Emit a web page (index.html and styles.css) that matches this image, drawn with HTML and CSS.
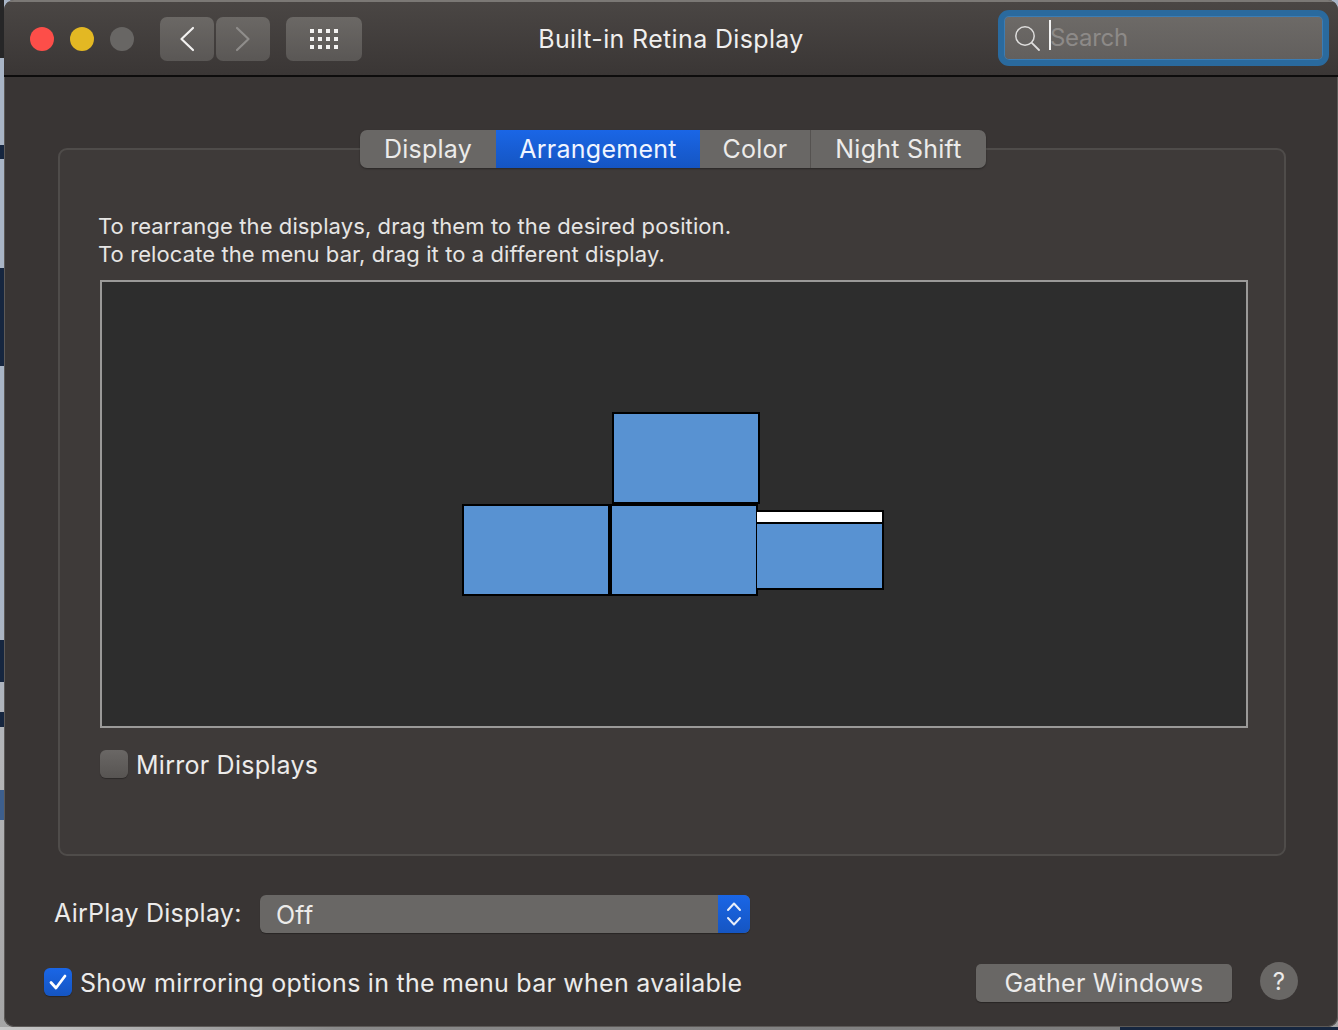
FILE: index.html
```html
<!DOCTYPE html>
<html lang="en">
<head>
<meta charset="utf-8">
<title>Built-in Retina Display</title>
<link rel="stylesheet" href="styles.css">
</head>
<body>
<div class="desktop">
  <i class="patch p1"></i><i class="patch p2"></i><i class="patch p3"></i><i class="patch p4"></i><i class="patch p5"></i><i class="patch p6"></i><i class="patch p7"></i>
  <main class="window">
    <header class="titlebar">
      <div class="lights">
        <span class="light red"></span>
        <span class="light yellow"></span>
        <span class="light grey"></span>
      </div>
      <div class="nav">
        <button class="tb-btn nav-btn">
          <svg width="16" height="26" viewBox="0 0 16 26"><path d="M14 2 2.500 13 14 24" fill="none" stroke="#f2f1f0" stroke-width="2.200" stroke-linecap="round" stroke-linejoin="round"/></svg>
        </button>
        <button class="tb-btn nav-btn">
          <svg width="16" height="26" viewBox="0 0 16 26"><path d="M2 2 13.500 13 2 24" fill="none" stroke="#8f8d8b" stroke-width="2.200" stroke-linecap="round" stroke-linejoin="round"/></svg>
        </button>
      </div>
      <button class="tb-btn grid-btn">
        <svg width="30" height="22" viewBox="0 0 30 22" fill="#f4f3f2">
          <rect x="1" y="1" width="4" height="4"/><rect x="9" y="1" width="4" height="4"/><rect x="17" y="1" width="4" height="4"/><rect x="25" y="1" width="4" height="4"/>
          <rect x="1" y="9" width="4" height="4"/><rect x="9" y="9" width="4" height="4"/><rect x="17" y="9" width="4" height="4"/><rect x="25" y="9" width="4" height="4"/>
          <rect x="1" y="17" width="4" height="4"/><rect x="9" y="17" width="4" height="4"/><rect x="17" y="17" width="4" height="4"/><rect x="25" y="17" width="4" height="4"/>
        </svg>
      </button>
      <h1 class="title">Built-in Retina Display</h1>
      <div class="search">
        <svg class="search-icon" width="26" height="26" viewBox="0 0 26 26"><circle cx="11" cy="11" r="9.200" fill="none" stroke="#dedddc" stroke-width="1.500"/><path d="M17.800 17.800 25 25" stroke="#dedddc" stroke-width="1.800" stroke-linecap="round"/></svg>
        <span class="caret"></span>
        <span class="placeholder">Search</span>
      </div>
    </header>

    <section class="content">
      <div class="panel">
        <nav class="tabs">
          <span class="tab t-display">Display</span>
          <span class="tab t-arr active">Arrangement</span>
          <span class="tab t-color">Color</span>
          <span class="tab t-night">Night Shift</span>
        </nav>
        <p class="help">To rearrange the displays, drag them to the desired position.<br>To relocate the menu bar, drag it to a different display.</p>
        <div class="canvas">
          <div class="screen s-top"></div>
          <div class="screen s-left"></div>
          <div class="screen s-mid"></div>
          <div class="screen s-right"><div class="menubar"></div></div>
        </div>
        <label class="check mirror"><span class="box"></span>Mirror Displays</label>
      </div>

      <div class="airplay">
        <span class="air-label">AirPlay Display:</span>
        <div class="select">
          <span class="sel-val">Off</span>
          <span class="stepper">
            <svg width="16" height="28" viewBox="0 0 16 28" fill="none" stroke="#e8eefa" stroke-width="2" stroke-linecap="round" stroke-linejoin="round"><path d="M2 10 8 3.500 14 10"/><path d="M2 18 8 24.500 14 18"/></svg>
          </span>
        </div>
      </div>

      <div class="footer">
        <label class="check show"><span class="box on">
          <svg width="20" height="18" viewBox="0 0 20 18"><path d="M3 9.500 8 15 17 3" fill="none" stroke="#fff" stroke-width="2.800" stroke-linecap="round" stroke-linejoin="round"/></svg>
        </span>Show mirroring options in the menu bar when available</label>
        <button class="gather">Gather Windows</button>
        <button class="help-btn">?</button>
      </div>
    </section>
  </main>
</div>
</body>
</html>
```
FILE: styles.css
```css
* { box-sizing: border-box; }
html, body { margin: 0; height: 100%; overflow: hidden; }
body { font-family: "Inter", "Liberation Sans", sans-serif; letter-spacing: .25px; }
button { font: inherit; border: 0; padding: 0; letter-spacing: inherit; }

.desktop {
  position: relative;
  width: 1338px;
  height: 1030px;
  background: linear-gradient(#a9b5c6 0, #a9b5c6 600px, #b4b5b7 760px, #a5a5a5);
  padding-left: 4px;
}
.desktop::after {
  content: "";
  position: absolute;
  left: 0;
  bottom: 0;
  width: 1120px;
  height: 3px;
  background: linear-gradient(90deg, #c8c8c8, #8a8a8a 30%, #7c7c7c);
}
.patch { position: absolute; left: 0; width: 4px; display: block; background: #16263f; }
.p1 { top: 0; height: 58px; background: #262627; }
.p2 { top: 268px; height: 98px; }
.p3 { top: 640px; height: 42px; }
.p4 { top: 1027px; left: 1120px; width: 218px; height: 3px; z-index: 1; }
.p5 { top: 145px; height: 14px; }
.p6 { top: 712px; height: 15px; }
.p7 { top: 790px; height: 30px; background: #3d5f8d; }

.window {
  position: relative;
  width: 1334px;
  height: 1027px;
  background: #393534;
  border-radius: 10px;
  overflow: hidden;
  box-shadow: inset 0 0 0 1px #5c5957;
  display: flex;
  flex-direction: column;
}

.titlebar {
  height: 77px;
  flex: none;
  display: flex;
  align-items: center;
  padding: 0 0 0 26px;
  background: linear-gradient(#4a4644, #3a3635);
  border-top: 2px solid #7b7875;
  border-bottom: 2px solid #0d0c0c;
  position: relative;
}
.lights { display: flex; gap: 16px; width: 130px; flex: none; }
.light { width: 24px; height: 24px; border-radius: 50%; }
.red { background: #fd4e49; }
.yellow { background: #e3b823; }
.grey { background: #686664; }

.nav { display: flex; gap: 2px; }
.tb-btn {
  height: 44px;
  border-radius: 7px;
  background: linear-gradient(#6b6865, #5a5755);
  display: flex;
  align-items: center;
  justify-content: center;
}
.nav-btn { width: 54px; }
.grid-btn { width: 76px; margin-left: 16px; }

.title {
  position: absolute;
  left: 0;
  right: 0;
  top: 21px;
  margin: 0;
  text-align: center;
  font-size: 25px;
  font-weight: 400;
  line-height: 32px;
  letter-spacing: .35px;
  color: #f0efee;
}

.search {
  position: absolute;
  left: 994px;
  top: 8px;
  width: 331px;
  height: 56px;
  border: 6px solid #2a6a9e;
  border-radius: 11px;
  background: linear-gradient(#6d6a67, #625f5d);
  box-shadow: inset 0 0 0 1px #3b7db5;
  display: flex;
  align-items: center;
}
.search-icon { position: absolute; left: 10px; top: 9px; }
.caret { position: absolute; left: 45px; top: 4px; width: 2px; height: 30px; background: #f4f4f4; }
.placeholder { position: absolute; left: 46px; top: 7px; font-size: 24px; line-height: 30px; letter-spacing: -.3px; color: #8d8a88; }

.content { flex: 1; position: relative; padding: 71px 48px 0 54px; }

.panel {
  position: relative;
  width: 1228px;
  height: 708px;
  background: #3e3a39;
  border: 2px solid #4f4c4a;
  border-radius: 9px;
  padding: 62px 36px 0 38px;
}
.tabs {
  position: absolute;
  left: 300px;
  top: -20px;
  height: 38px;
  display: flex;
  border-radius: 7px;
  overflow: hidden;
  background: #696765;
  box-shadow: 0 1px 2px rgba(0,0,0,.35);
  font-size: 25px;
  color: #ecebea;
}
.tab { display: flex; align-items: center; justify-content: center; line-height: 38px; }
.t-display { width: 136px; }
.t-arr { width: 204px; }
.t-color { width: 111px; border-right: 1px solid #555250; }
.t-night { width: 175px; }
.active { background: linear-gradient(#1a66e6, #1555c2); color: #f0f5ff; }

.help {
  margin: 0;
  font-size: 22px;
  line-height: 28px;
  letter-spacing: .1px;
  color: #e6e5e4;
}
.canvas {
  position: relative;
  margin: 12px 0 0 2px;
  width: 1148px;
  height: 448px;
  background: #2d2d2d;
  border: 2px solid #9a9998;
}
.screen { position: absolute; background: #5892d2; border: 2px solid #000; }
.s-top { left: 510px; top: 130px; width: 148px; height: 92px; }
.s-left { left: 360px; top: 222px; width: 148px; height: 92px; }
.s-mid { left: 508px; top: 222px; width: 148px; height: 92px; }
.s-right { left: 655px; top: 228px; width: 127px; height: 80px; border-left: 0; }
.menubar { height: 10px; background: #fff; border-bottom: 2px solid #000; box-sizing: content-box; }

.check {
  display: flex;
  align-items: center;
  gap: 8px;
  font-size: 25px;
  line-height: 30px;
  color: #ecebea;
}
.box {
  width: 28px;
  height: 28px;
  flex: none;
  border-radius: 6px;
  background: linear-gradient(#6a6765, #575452);
  box-shadow: 0 1px 1px rgba(0,0,0,.3);
  display: flex;
  align-items: center;
  justify-content: center;
}
.box.on { background: linear-gradient(#1a66e6, #1555c2); }
.mirror { margin: 22px 0 0 2px; }
.mirror .box { margin-top: -2px; }

.airplay { display: flex; align-items: center; margin: 38px 0 0 -4px; height: 40px; }
.air-label {
  width: 206px;
  flex: none;
  margin-top: -2px;
  font-size: 25px;
  color: #ecebea;
}
.select {
  width: 490px;
  height: 38px;
  border-radius: 6px;
  overflow: hidden;
  display: flex;
  justify-content: space-between;
  background: #696765;
  box-shadow: 0 1px 1px rgba(0,0,0,.3);
}
.sel-val {
  padding-left: 16px;
  font-size: 25px;
  line-height: 40px;
  color: #ecebea;
}
.stepper {
  width: 32px;
  background: linear-gradient(#1a66e6, #1555c2);
  display: flex;
  align-items: center;
  justify-content: center;
}

.footer { position: relative; height: 40px; margin: 28px 0 0 -14px; display: flex; align-items: center; }
.show { flex: none; margin-top: 2px; }
.show .box { margin-top: -2px; }
.gather {
  position: absolute;
  left: 932px;
  top: 2px;
  width: 256px;
  height: 38px;
  border-radius: 5px;
  background: #696765;
  box-shadow: 0 1px 1px rgba(0,0,0,.3);
  font-size: 25px;
  color: #ecebea;
}
.help-btn {
  position: absolute;
  left: 1216px;
  top: 0;
  width: 38px;
  height: 38px;
  border-radius: 50%;
  background: #696765;
  font-size: 24px;
  color: #ecebea;
}
```
